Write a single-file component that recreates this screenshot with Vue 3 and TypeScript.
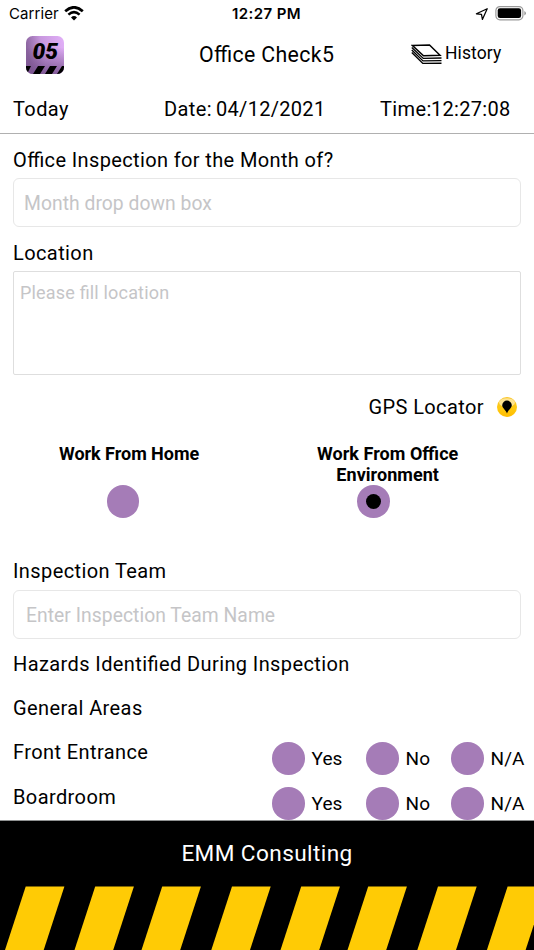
<script setup lang="ts">
import { ref } from 'vue'

type Place = 'home' | 'office'

const place = ref<Place>('office')
const areas: string[] = ['Front Entrance', 'Boardroom']
const answers = [
  { label: 'Yes', key: 'yes' },
  { label: 'No', key: 'no' },
  { label: 'N/A', key: 'na' },
]
const stripes: number[] = [25.7, 95.2, 162.2, 232, 301.2, 368.2, 438, 507.6]
</script>

<template>
  <div class="screen">
    <div class="status">
      <span class="carrier">Carrier</span>
      <svg class="wifi" width="20" height="15" viewBox="0 0 20 15">
        <path d="M1.2 5.2Q10 -2.6 18.8 5.2" fill="none" stroke="#000" stroke-width="2.7" />
        <path d="M4.4 8.6Q10 3.7 15.6 8.6" fill="none" stroke="#000" stroke-width="2.5" />
        <path d="M7 11.5Q10 8.7 13 11.5L10 14.5Z" fill="#000" />
      </svg>
      <span class="clock">12:27 PM</span>
      <svg class="arrow" width="14" height="14" viewBox="0 0 14 14">
        <path d="M12.2 1.7L1.4 6.8L6.5 7.4L7.4 12.4Z" fill="none" stroke="#000" stroke-width="1.25" stroke-linejoin="round" />
      </svg>
      <svg class="battery" width="32" height="16" viewBox="0 0 32 16">
        <rect x="0.9" y="0.6" width="27" height="13.2" rx="4" fill="none" stroke="#9a9a9a" stroke-width="1.2" />
        <rect x="2.7" y="2.3" width="23.4" height="9.8" rx="2.3" />
        <path d="M29.3 4.9Q31 5.7 31 7.2Q31 8.7 29.3 9.5Z" fill="#9a9a9a" />
      </svg>
    </div>

    <header class="titlebar">
      <svg class="logo" width="38" height="38" viewBox="0 0 38 38">
        <defs>
          <linearGradient id="logoTop" x1="0" y1="0.2" x2="1" y2="0">
            <stop offset="0" stop-color="#8c65a0" />
            <stop offset="0.4" stop-color="#c898df" />
            <stop offset="1" stop-color="#e2b0f8" />
          </linearGradient>
          <linearGradient id="logoShade" x1="0" y1="0" x2="0" y2="1">
            <stop offset="0.3" stop-color="#76508c" stop-opacity="0" />
            <stop offset="1" stop-color="#76508c" stop-opacity="0.85" />
          </linearGradient>
          <clipPath id="logoClip"><rect width="38" height="38" rx="6.5" /></clipPath>
        </defs>
        <g clip-path="url(#logoClip)">
          <rect width="38" height="38" fill="url(#logoTop)" />
          <rect width="38" height="38" fill="url(#logoShade)" />
          <path d="M0 30H5L1 38H-4ZM12 30H19L14 38H7ZM24 30H31L26 38H19ZM36 30H42L38 38H31Z" />
          <text x="6.4" y="23.4" textLength="25.5" lengthAdjust="spacingAndGlyphs" class="logo-num">05</text>
        </g>
      </svg>
      <h1 class="title">Office Check5</h1>
      <button class="history" type="button">
        <svg width="32" height="21" viewBox="0 0 32 21" fill="none" stroke="#000">
          <path d="M1.2 1.4L18.5 1L29 11.2L12.5 11.8Z" stroke-width="1.5" />
          <path d="M0.8 3.6L12.3 14.4L30.5 14" stroke-width="1.4" />
          <path d="M0.8 6L12 16.9L30.5 16.6" stroke-width="1.4" />
          <path d="M0.8 8.4L11.8 19.4L30.5 19.2" stroke-width="1.4" />
        </svg>
        <span>History</span>
      </button>
    </header>

    <div class="daterow">
      <span class="today">Today</span>
      <span class="date">Date:</span>
      <span class="dateval">04/12/2021</span>
      <span class="time">Time:</span>
      <span class="timeval">12:27:08</span>
    </div>

    <main class="form">
      <div class="label month">Office Inspection for the Month of?</div>
      <div class="field select">Month drop down box</div>
      <div class="label loc">Location</div>
      <div class="field area">Please fill location</div>
      <div class="gps">
        <span>GPS Locator</span>
        <svg width="20" height="20" viewBox="0 0 20 20">
          <defs>
            <linearGradient id="pinBg" x1="0" y1="0" x2="0" y2="1">
              <stop offset="0" stop-color="#f9c62c" />
              <stop offset="0.6" stop-color="#ffc90e" />
              <stop offset="1" stop-color="#ffbd00" />
            </linearGradient>
          </defs>
          <circle cx="10" cy="10" r="10" fill="url(#pinBg)" />
          <ellipse cx="10" cy="5.6" rx="8" ry="4.4" fill="#fff" opacity="0.5" />
          <path d="M10 3.6A4.8 4.8 0 0 1 14.8 8.2C14.8 11 11.4 12.6 10 16.4C8.6 12.6 5.2 11 5.2 8.2A4.8 4.8 0 0 1 10 3.6Z" />
        </svg>
      </div>

      <div class="places">
        <div class="place home" @click="place = 'home'">
          <span class="place-name">Work From Home</span>
          <span class="radio"><i v-if="place === 'home'" class="dot" /></span>
        </div>
        <div class="place office" @click="place = 'office'">
          <span class="place-name">Work From Office<br />Environment</span>
          <span class="radio"><i v-if="place === 'office'" class="dot" /></span>
        </div>
      </div>

      <div class="label team">Inspection Team</div>
      <div class="field name">Enter Inspection Team Name</div>
      <div class="label hazards">Hazards Identified During Inspection</div>
      <div class="label general">General Areas</div>
      <div v-for="area in areas" :key="area" class="area-row">
        <span class="label">{{ area }}</span>
        <div v-for="a in answers" :key="a.key" class="answer" :class="a.key">
          <span class="radio" />
          <span>{{ a.label }}</span>
        </div>
      </div>
    </main>

    <footer class="footer">
      <div class="company">EMM Consulting</div>
      <svg class="stripes" width="534" height="64" viewBox="0 0 534 64">
        <path v-for="x in stripes" :key="x" :d="`M${x} 0.4h38.7L${x + 18} 64h-38.7Z`" fill="#ffcb05" />
      </svg>
    </footer>
  </div>
</template>

<style>
body {
  margin: 0;
  background: #fff;
}
</style>

<style scoped>
.screen {
  width: 534px;
  height: 950px;
  overflow: hidden;
  display: flex;
  flex-direction: column;
  box-sizing: border-box;
  background: #fff;
  color: #000;
  font-family: Roboto, sans-serif;
  font-size: 20px;
  line-height: 24px;
  letter-spacing: 0.4px;
  white-space: nowrap;
  font-feature-settings: 'liga' 1;
}
svg {
  display: block;
  flex: none;
}
.status {
  display: flex;
  height: 28px;
  flex: none;
  font-family: Inter, sans-serif;
  font-size: 15px;
  line-height: 28px;
  letter-spacing: 0;
}
.carrier {
  width: 56px;
  padding-left: 9px;
  letter-spacing: 0.1px;
}
.wifi {
  margin: 5.5px 0 0 -1px;
}
.clock {
  width: 78px;
  margin-left: 148px;
  font-weight: 600;
  letter-spacing: 0.4px;
}
.arrow {
  margin: 7px 0 0 165px;
}
.battery {
  margin: 6px 0 0 6px;
}
.titlebar {
  display: flex;
  height: 56px;
  flex: none;
}
.logo {
  margin: 7.5px 0 0 26px;
}
.logo-num {
  font: italic 900 22px Roboto, sans-serif;
  letter-spacing: 0;
}
.title {
  width: 212px;
  margin: 15px 0 0 135px;
  font-size: 21.3px;
  font-weight: 400;
  line-height: 24px;
  letter-spacing: 0.35px;
}
.history {
  display: flex;
  gap: 2px;
  padding: 0;
  margin-top: 13px;
  border: 0;
  background: none;
  color: #000;
  font: 400 17.5px/24px Roboto, sans-serif;
  letter-spacing: 0.1px;
  align-items: flex-start;
}
.history svg {
  margin-top: 3px;
}
.daterow {
  display: flex;
  height: 50px;
  flex: none;
  padding: 13px 0 0 13px;
  box-sizing: border-box;
  border-bottom: 1px solid #b0b0b0;
}
.today {
  width: 151px;
}
.date {
  width: 52px;
}
.dateval {
  width: 164px;
  letter-spacing: 0.3px;
}
.time {
  width: 51px;
}
.timeval {
  letter-spacing: 0.3px;
}
.form {
  display: flex;
  flex: none;
  flex-direction: column;
  height: 686px;
  padding: 14px 0 0 13px;
  box-sizing: border-box;
  overflow: hidden;
}
.label {
  flex: none;
}
.month {
  letter-spacing: 0.37px;
}
.field {
  flex: none;
  width: 508px;
  box-sizing: border-box;
  border: 1px solid #e7e7e7;
  border-radius: 6px;
  color: #c5c5c7;
  font-size: 19.3px;
  letter-spacing: 0.05px;
}
.select {
  height: 49px;
  margin-top: 6px;
  padding: 13px 10px 0;
}
.loc {
  margin-top: 14px;
}
.area {
  height: 104px;
  margin-top: 6px;
  padding: 9px 6px;
  border-color: #dedede;
  border-radius: 2px;
  font-size: 18px;
  letter-spacing: 0.18px;
}
.gps {
  display: flex;
  flex: none;
  justify-content: flex-end;
  margin: 20px 17px 0 0;
  gap: 13px;
}
.gps svg {
  margin-top: 2px;
}
.places {
  display: flex;
  flex: none;
  height: 102px;
  margin-top: 24px;
}
.place {
  display: flex;
  flex-direction: column;
  align-items: flex-start;
  font-size: 18px;
  font-weight: 700;
  line-height: 21px;
  letter-spacing: 0;
}
.place-name {
  height: 42px;
}
.home {
  width: 258px;
  padding-left: 46px;
  box-sizing: border-box;
}
.home .place-name {
  letter-spacing: -0.04px;
}
.home .radio {
  margin-left: 47.5px;
}
.office {
  padding-left: 46px;
}
.office .place-name {
  text-align: center;
  letter-spacing: 0.04px;
}
.office .radio {
  margin-left: 40px;
}
.radio {
  display: flex;
  align-items: center;
  justify-content: center;
  flex: none;
  width: 32.5px;
  height: 32.5px;
  border-radius: 50%;
  background: #a57cb7;
}
.dot {
  width: 15px;
  height: 15px;
  border-radius: 50%;
  background: #000;
}
.team {
  margin-top: 14px;
}
.name {
  height: 49px;
  margin-top: 7px;
  padding: 13px 12px 0;
}
.hazards {
  margin-top: 13px;
}
.general {
  margin-top: 20px;
}
.area-row {
  display: flex;
  height: 45px;
  flex: none;
}
.general + .area-row {
  margin-top: 20px;
}
.area-row .label {
  width: 259px;
}
.answer {
  display: flex;
  gap: 7px;
  margin-top: 2px;
  font-size: 19px;
  line-height: 34px;
  letter-spacing: 0.1px;
}
.yes {
  width: 94px;
}
.no {
  width: 85px;
}
.footer {
  height: 130px;
  flex: none;
  box-sizing: border-box;
  border-top: 1px solid #8f9191;
  background: #000;
}
.company {
  height: 65px;
  color: #fff;
  font-size: 22.6px;
  line-height: 65px;
  letter-spacing: 0.4px;
  text-align: center;
}
</style>
